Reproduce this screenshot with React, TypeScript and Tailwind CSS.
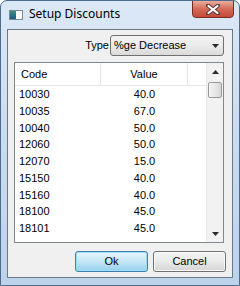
import React from 'react'

const rows: [string, string][] = [
  ['10030', '40.0'],
  ['10035', '67.0'],
  ['10040', '50.0'],
  ['12060', '50.0'],
  ['12070', '15.0'],
  ['15150', '40.0'],
  ['15160', '40.0'],
  ['18100', '45.0'],
  ['18101', '45.0'],
]

const Arrow: React.FC<{ up?: boolean }> = ({ up }) => (
  <svg width="7" height="4" viewBox="0 0 7 4">
    <path d={up ? 'M0 4 L3.5 0 L7 4 Z' : 'M0 0 L3.5 4 L7 0 Z'} fill="#2b2b2b" />
  </svg>
)

const App: React.FC = () => {
  return (
    <div className="w-[240px] h-[286px] flex flex-col rounded-t-[7px] border border-[#4f6a8c] bg-gradient-to-b from-[#dbe8f6] via-[#c9dbf0] to-[#bcd3ec] overflow-hidden font-['Liberation_Sans',sans-serif] text-[11px] text-black">
      {/* title bar */}
      <div className="h-[28px] flex items-center pl-[8px] shrink-0">
        <div className="w-[14px] h-[10px] border border-[#7a8a96] bg-white flex mt-[-1px]">
          <div className="w-[6px] h-full bg-gradient-to-b from-[#3f8f7c] to-[#1e5a8a]" />
        </div>
        <span className="ml-[6px] font-['Noto_Sans',sans-serif] text-[12px] text-black mt-[-2px]">Setup Discounts</span>
        <div className="ml-auto mr-[5px] self-start -mt-px w-[42px] h-[18px] rounded-b-[4px] border border-[#7b2a22] bg-gradient-to-b from-[#e8ae9e] via-[#d36a58] to-[#c44a38] flex items-center justify-center">
          <svg width="14" height="11" viewBox="0 0 14 11">
            <path d="M2 1.5 L12 9.5 M12 1.5 L2 9.5" stroke="#5a3a36" strokeWidth="4" strokeLinecap="round" />
            <path d="M2.5 2 L11.5 9 M11.5 2 L2.5 9" stroke="#ffffff" strokeWidth="2.2" strokeLinecap="round" />
          </svg>
        </div>
      </div>

      {/* client area */}
      <div className="mx-[6px] h-[249px] border border-[#6b7885] bg-[#f0f0f0] flex flex-col">
        <div className="flex justify-end items-start pt-[5px] pr-[8px]">
          <span className="mt-[2px] mr-[1px]">Type</span>
          <div className="w-[114px] h-[21px] rounded-[3px] border border-[#707070] bg-gradient-to-b from-[#f3f3f3] via-[#ebebeb] to-[#dadada] flex items-center pl-[3px] pr-[4px]">
            <span className="flex-1">%ge Decrease</span>
            <Arrow />
          </div>
        </div>

        <div className="mt-[6px] ml-[6px] w-[210px] h-[181px] border border-[#828790] bg-white flex">
          <div className="flex-1 flex flex-col">
            <div className="h-[23px] flex border-b border-[#e5e5e5] shrink-0">
              <div className="w-[86px] border-r border-[#e5e5e5] flex items-center pl-[6px]">Code</div>
              <div className="w-[87px] border-r border-[#e5e5e5] flex items-center justify-center">Value</div>
              <div className="flex-1" />
            </div>
            {rows.map(([code, value]) => (
              <div key={code} className="h-[16.75px] flex items-center shrink-0">
                <div className="w-[86px] pl-[4px]">{code}</div>
                <div className="w-[87px] text-center">{value}</div>
              </div>
            ))}
          </div>
          <div className="w-[17px] bg-[#f2f2f2] border-l border-[#e8e8e8] flex flex-col">
            <div className="h-[17px] flex items-center justify-center">
              <Arrow up />
            </div>
            <div className="mt-[2px] mx-[1px] h-[16px] rounded-[2px] border border-[#9a9a9a] bg-gradient-to-r from-[#f4f4f4] via-[#e8e8e8] to-[#d6d6d6]" />
            <div className="flex-1" />
            <div className="h-[17px] flex items-center justify-center">
              <Arrow />
            </div>
          </div>
        </div>

        <div className="mt-[8px] flex justify-end gap-[5px] pr-[6px]">
          <button className="w-[73px] h-[21px] rounded-[3px] border border-[#3c7fb1] bg-gradient-to-b from-[#e8f6fd] via-[#c4e5f6] to-[#98d1ef] shadow-[inset_0_0_0_1px_#9ee0fb]">Ok</button>
          <button className="w-[73px] h-[21px] rounded-[3px] border border-[#707070] bg-gradient-to-b from-[#f2f2f2] via-[#ebebeb] to-[#d4d4d4] shadow-[inset_0_0_0_1px_#fbfbfb]">Cancel</button>
        </div>
      </div>
    </div>
  )
}

export default App
